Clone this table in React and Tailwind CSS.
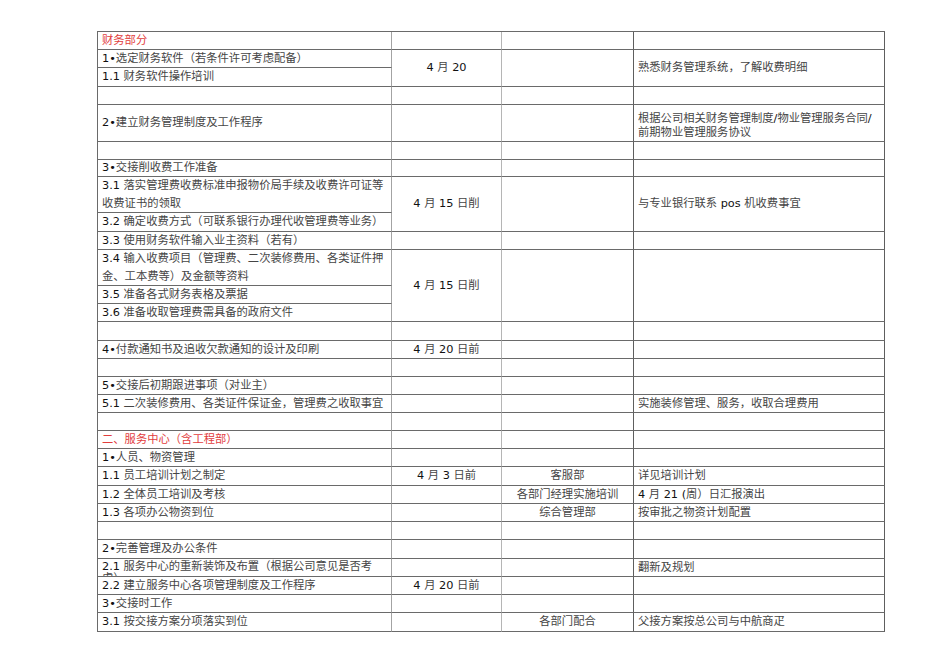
import React from "react";

const T = ({ s }) =>
  s.split(/([\x20-\x7E•]+)/).map((p, i) =>
    i % 2 ? (
      <span key={i} className="text-[#111]">
        {p}
      </span>
    ) : (
      <React.Fragment key={i}>{p}</React.Fragment>
    )
  );

const spanCls = { 1: "", 2: "row-span-2", 3: "row-span-3" };
const colCls = {
  1: "border-r border-r-[#a3a3a3] px-[4px] justify-start",
  2: "border-r border-r-[#b5b5b5] justify-center text-center",
  3: "border-r border-r-[#5e5e5e] justify-center text-center",
  4: "border-r border-r-[#5e5e5e] px-[4px] justify-start",
};

const E = { t: "" };
const rows = [
  [{ t: "财务部分", red: true }, E, E, E],
  [
    { t: "1•选定财务软件（若条件许可考虑配备）" },
    { t: "4 月 20", span: 2 },
    { t: "", span: 2 },
    { t: "熟悉财务管理系统，了解收费明细", span: 2 },
  ],
  [{ t: "1.1 财务软件操作培训" }, null, null, null],
  [E, E, E, E],
  [
    { t: "2•建立财务管理制度及工作程序" },
    E,
    E,
    { t: "根据公司相关财务管理制度/物业管理服务合同/前期物业管理服务协议", two: true },
  ],
  [E, E, E, E],
  [{ t: "3•交接削收费工作准备" }, E, E, E],
  [
    { t: "3.1 落实管理费收费标准申报物价局手续及收费许可证等收费证书的领取" },
    { t: "4 月 15 日削", span: 2 },
    { t: "", span: 2 },
    { t: "与专业银行联系 pos 机收费事宜", span: 2 },
  ],
  [{ t: "3.2 确定收费方式（可联系银行办理代收管理费等业务）" }, null, null, null],
  [{ t: "3.3 使用财务软件输入业主资料（若有）" }, E, E, E],
  [
    { t: "3.4 输入收费项目（管理费、二次装修费用、各类证件押金、工本费等）及金额等资料" },
    { t: "4 月 15 日削", span: 3 },
    { t: "", span: 3 },
    { t: "", span: 3 },
  ],
  [{ t: "3.5 准备各式财务表格及票据" }, null, null, null],
  [{ t: "3.6 准备收取管理费需具备的政府文件" }, null, null, null],
  [E, E, E, E],
  [{ t: "4•付款通知书及追收欠款通知的设计及印刷" }, { t: "4 月 20 日前" }, E, E],
  [E, E, E, E],
  [{ t: "5•交接后初期跟进事项（对业主）" }, E, E, E],
  [
    { t: "5.1 二次装修费用、各类证件保证金，管理费之收取事宜" },
    E,
    E,
    { t: "实施装修管理、服务，收取合理费用" },
  ],
  [E, E, E, E],
  [{ t: "二、服务中心（含工程部）", red: true }, E, E, E],
  [{ t: "1•人员、物资管理" }, E, E, E],
  [{ t: "1.1 员工培训计划之制定" }, { t: "4 月 3 日前" }, { t: "客服部" }, { t: "详见培训计划" }],
  [{ t: "1.2 全体员工培训及考核" }, E, { t: "各部门经理实施培训" }, { t: "4 月 21 (周）日汇报演出" }],
  [{ t: "1.3 各项办公物资到位" }, E, { t: "综合管理部" }, { t: "按审批之物资计划配置" }],
  [E, E, E, E],
  [{ t: "2•完善管理及办公条件" }, E, E, E],
  [
    { t: "2.1 服务中心的重新装饰及布置（根据公司意见是否考虑）", clip: true },
    E,
    E,
    { t: "翻新及规划" },
  ],
  [{ t: "2.2 建立服务中心各项管理制度及工作程序" }, { t: "4 月 20 日前" }, E, E],
  [{ t: "3•交接时工作" }, E, E, E],
  [{ t: "3.1 按交接方案分项落实到位" }, E, { t: "各部门配合" }, { t: "父接方案按总公司与中航商疋" }],
];

function Cell({ cell, col }) {
  const base =
    "flex border-b border-b-[#6a6a6a] overflow-hidden " +
    colCls[col] +
    " " +
    (spanCls[cell.span || 1] || "");
  if (cell.clip) {
    return (
      <div className={base + " items-start"}>
        <div className="pt-[2px] leading-[12px] text-[#454545]">
          <T s={cell.t} />
        </div>
      </div>
    );
  }
  return (
    <div className={base + (cell.two ? " items-start" : " items-center")}>
      <div
        className={
          (cell.red ? "text-[#e23d3d] " : "text-[#454545] ") +
          (cell.two ? "leading-[14px] pt-[7px]" : "leading-[18px]")
        }
      >
        {cell.red ? cell.t : <T s={cell.t} />}
      </div>
    </div>
  );
}

export default function App() {
  return (
    <div className="min-h-[672px] w-[950px] bg-white pt-[31px] pl-[97px] font-['DejaVu_Sans','Noto_Sans_CJK_SC',sans-serif] text-[11.3px]">
      <div className="grid w-[788px] grid-cols-[294px_110px_132px_251px] grid-rows-[18px_18px_19px_18px_37px_18px_17px_36px_19px_18px_36px_18px_18px_19px_18px_18px_18px_18px_18px_18px_18px_19px_18px_18px_18px_19px_18px_18px_18px_19px] border-t border-l border-[#6a6a6a]">
        {rows.map((r, ri) =>
          r.map((cell, ci) =>
            cell ? <Cell key={ri + "-" + ci} cell={cell} col={ci + 1} /> : null
          )
        )}
      </div>
    </div>
  );
}
